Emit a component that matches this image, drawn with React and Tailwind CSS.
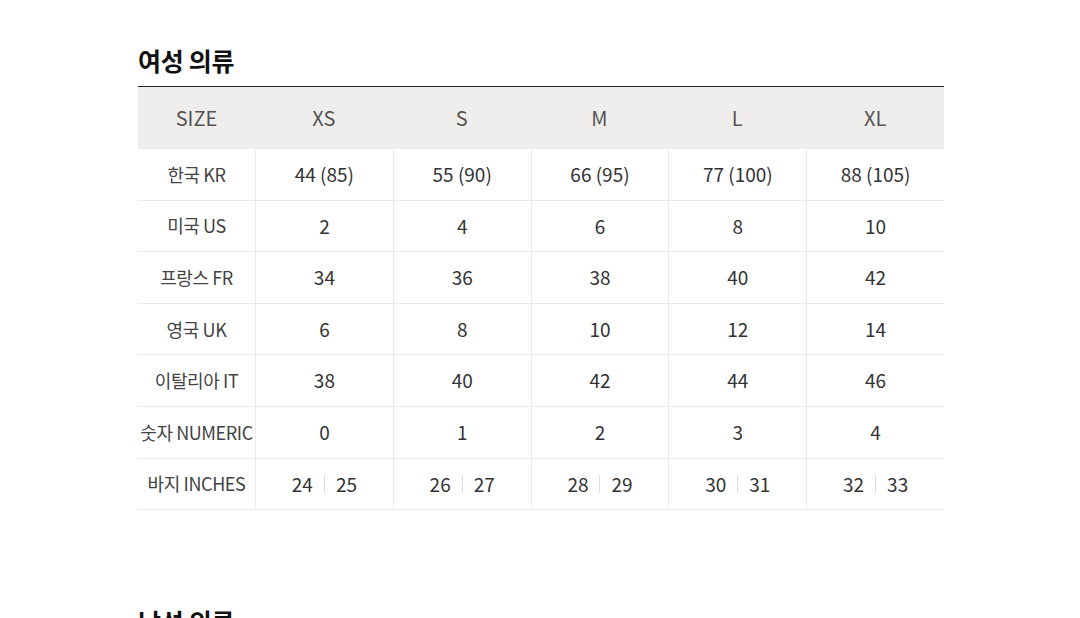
import React from "react";

const sizes = ["XS", "S", "M", "L", "XL"];

const rows = [
  { label: "한국 KR", values: ["44 (85)", "55 (90)", "66 (95)", "77 (100)", "88 (105)"] },
  { label: "미국 US", values: ["2", "4", "6", "8", "10"] },
  { label: "프랑스 FR", values: ["34", "36", "38", "40", "42"] },
  { label: "영국 UK", values: ["6", "8", "10", "12", "14"] },
  { label: "이탈리아 IT", values: ["38", "40", "42", "44", "46"] },
  { label: "숫자 NUMERIC", values: ["0", "1", "2", "3", "4"] },
  {
    label: "바지 INCHES",
    values: [
      ["24", "25"],
      ["26", "27"],
      ["28", "29"],
      ["30", "31"],
      ["32", "33"],
    ],
  },
];

const Cell = ({ value }) => {
  if (Array.isArray(value)) {
    return (
      <span className="flex items-center">
        {value[0]}
        <span className="mx-[11px] inline-block h-[18px] w-px bg-[#dcdcdc]"></span>
        {value[1]}
      </span>
    );
  }
  return <span>{value}</span>;
};

const SizeTable = ({ title }) => {
  return (
    <section>
      <h2 className="mb-[10px] text-[25px] font-bold leading-[32px] tracking-[-0.3px] text-[#111]">
        {title}
      </h2>
      <div className="w-[806px] border-t-[1.5px] border-[#222]">
        {/* header */}
        <div className="grid h-[62px] grid-cols-[117px_repeat(5,1fr)] bg-[#efeeec] text-[20px] text-[#555]">
          <div className="flex items-center justify-center">SIZE</div>
          {sizes.map((s) => (
            <div key={s} className="flex items-center justify-center">
              {s}
            </div>
          ))}
        </div>
        {rows.map((row) => (
          <div
            key={row.label}
            className="grid h-[51.6px] grid-cols-[117px_repeat(5,1fr)] border-b border-[#ebebeb] text-[19px] text-[#333]"
          >
            <div className="flex items-center justify-center whitespace-nowrap text-[18px] tracking-[-0.4px] text-[#444]">
              {row.label}
            </div>
            {row.values.map((v, i) => (
              <div
                key={i}
                className="flex items-center justify-center border-l border-[#ebebeb]"
              >
                <Cell value={v} />
              </div>
            ))}
          </div>
        ))}
      </div>
    </section>
  );
};

export default function App() {
  return (
    <div
      className="min-h-[618px] w-[1080px] overflow-hidden bg-white pl-[138px] pt-[44px]"
      style={{ fontFamily: '"Noto Sans CJK KR", "Noto Sans", sans-serif' }}
    >
      <SizeTable title="여성 의류" />
      <div className="mt-[95px]">
        <h2 className="text-[25px] font-bold leading-[32px] tracking-[-0.3px] text-[#111]">
          남성 의류
        </h2>
      </div>
    </div>
  );
}
